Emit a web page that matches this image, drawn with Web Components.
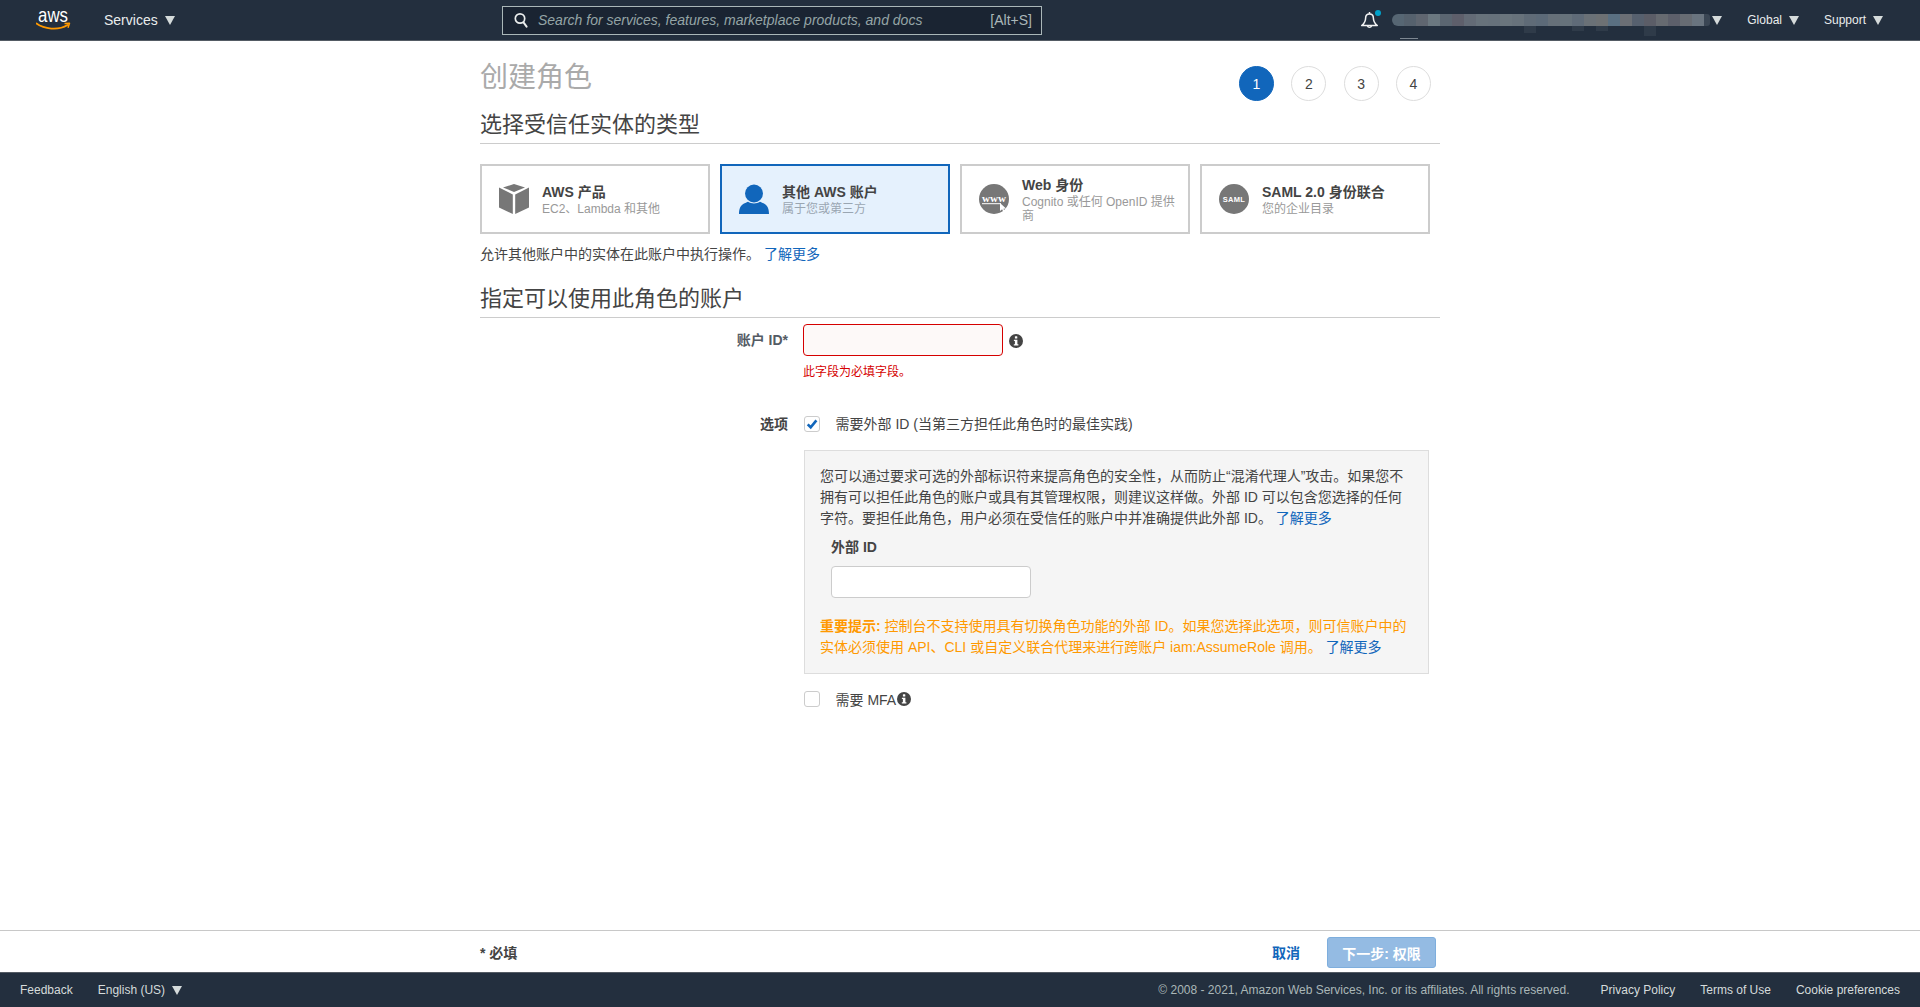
<!DOCTYPE html>
<html lang="zh-CN">
<head>
<meta charset="utf-8">
<title>创建角色</title>
<style>
html,body{margin:0;padding:0;height:100%;}
body{font-family:"Liberation Sans","Noto Sans CJK SC",sans-serif;font-size:14px;color:#444;background:#fff;display:flex;flex-direction:column;height:1007px;overflow:hidden;}
aws-header{flex:none;}
create-role-page{flex:1 1 auto;min-height:0;}
wizard-bar{flex:none;}
aws-footer{flex:none;}
</style>
</head>
<body>
<aws-header></aws-header>
<create-role-page></create-role-page>
<wizard-bar></wizard-bar>
<aws-footer></aws-footer>

<script>
function def(name, css, html, init){
  customElements.define(name, class extends HTMLElement{
    connectedCallback(){
      if(this.shadowRoot) return;
      const r=this.attachShadow({mode:'open'});
      const h=typeof html==='function'?html(this):html;
      r.innerHTML='<style>'+css+'</style>'+h;
      if(init) init(this,r);
    }
  });
}
const INFO='<svg width="14" height="14" viewBox="0 0 14 14" style="display:block"><circle cx="7" cy="7" r="7" fill="#444"/><rect x="5.9" y="2.3" width="2.4" height="2.3" rx=".4" fill="#fff"/><path d="M4.9 5.7h3.5v4.6h1v1.3H4.8v-1.3h1.1V7H4.9z" fill="#fff"/></svg>';

def('aws-caret',':host{display:inline-block;width:0;height:0;border-left:5px solid transparent;border-right:5px solid transparent;border-top:9px solid var(--c,#d5dbdb);}','');

def('info-icon',':host{display:inline-block;width:14px;height:14px;flex:none;}',INFO);

def('aws-logo',':host{display:block;width:34px;height:40px;}svg{display:block;}',
 '<svg width="42" height="40" viewBox="0 0 42 40"><text x="2" y="22" font-family="Liberation Sans,sans-serif" font-size="21" textLength="30" lengthAdjust="spacingAndGlyphs" fill="#fff">aws</text><path d="M0.500 23.500C8 29 22 31 31.500 25" fill="none" stroke="#f90" stroke-width="1.800" stroke-linecap="round"/><path d="M28.500 23.600 33.500 23.200 32 27.800" fill="none" stroke="#f90" stroke-width="1.500" stroke-linejoin="round"/></svg>');

const CELLS=['#566673','#55616d','#5f6670','#6b7880','#5b6671','#5e5f6b','#636b76','#67727b','#66717b','#6a757d','#67727b','#5f6b77','#5c6a78','#667079','#66727b','#5f6b78','#6a7177','#6d7174','#5a7082','#6b6f75','#56606e','#5b5d67','#666a70','#5c5f6a','#676c73','#69747f'];

def('aws-header',`
:host{display:flex;align-items:center;height:40px;background:#232f3e;border-bottom:1px solid #545b64;color:#eaeded;font-size:14px;padding-left:36px;}
.sv{margin-left:34px;display:flex;align-items:center;gap:7px;width:72px;}
.search{margin-left:326px;width:540px;height:29px;box-sizing:border-box;border:1px solid #aab7b8;background:#1a2432;display:flex;align-items:center;padding:0 9px 0 11px;}
.search svg{flex:none;}
.search i{margin-left:10px;flex:1;color:#95a5a6;font-style:italic;white-space:nowrap;}
.search span{color:#aab7b8;}
.right{margin-left:auto;display:flex;align-items:center;font-size:12px;padding-right:37px;}
.bell{display:block;width:21px;height:20px;margin-right:11px;}
.blur{width:318px;height:12px;border-radius:7px 0 0 7px;display:flex;position:relative;margin-right:2px;}
.blur span{flex:none;width:12px;height:12px;}
.blur span:first-child{border-radius:7px 0 0 7px;}
.blur b{flex:1;background:#3a4654;border-radius:0 3px 3px 0;}
.d{position:absolute;top:12px;width:12px;background:#2f3b49;}
.mark{position:absolute;left:8px;top:24px;width:18px;height:1px;background:#7d8791;}
.g{display:flex;align-items:center;gap:7px;}
`,`
<aws-logo></aws-logo>
<div class="sv">Services <aws-caret></aws-caret></div>
<div class="search">
  <svg width="14" height="16" viewBox="0 0 14 16"><circle cx="6" cy="6.500" r="4.700" fill="none" stroke="#eaeded" stroke-width="1.700"/><path d="M9.300 10.200 12.600 14.600" stroke="#eaeded" stroke-width="2" stroke-linecap="round"/></svg>
  <i>Search for services, features, marketplace products, and docs</i><span>[Alt+S]</span>
</div>
<div class="right">
  <svg class="bell" viewBox="0 0 21 20"><path d="M9.500 4c-2.600 0-3.900 1.800-3.900 4.200 0 3-.8 4.800-3.900 7.300h15.600c-3.100-2.500-3.900-4.300-3.900-7.300C13.400 5.800 12.100 4 9.500 4z" fill="none" stroke="#f2f3f3" stroke-width="1.500" stroke-linejoin="round"/><path d="M9.500 2v2" stroke="#f2f3f3" stroke-width="1.500"/><path d="M7.400 15.800a2.200 2.200 0 0 0 4.200 0" fill="none" stroke="#f2f3f3" stroke-width="1.400"/><circle cx="18" cy="3" r="3" fill="#00a1c9"/></svg>
  <div class="blur">${CELLS.map(c=>`<span style="background:${c}"></span>`).join('')}<b></b>
    <div class="d" style="left:132px;height:7px"></div><div class="d" style="left:180px;height:5px"></div><div class="d" style="left:204px;height:5px"></div><div class="d" style="left:252px;height:10px"></div>
    <div class="mark"></div></div>
  <aws-caret></aws-caret>
  <div class="g" style="margin-left:25px">Global <aws-caret></aws-caret></div>
  <div class="g" style="margin-left:25px">Support <aws-caret></aws-caret></div>
</div>
`);

def('step-dots',`
:host{display:flex;gap:17.330px;}
span{width:35px;height:35px;box-sizing:border-box;border:1px solid #ddd;border-radius:50%;display:flex;align-items:center;justify-content:center;font-size:14px;color:#444;background:#fff;}
span.on{background:#1166bb;border-color:#1166bb;color:#fff;}
`,'<span class="on">1</span><span>2</span><span>3</span><span>4</span>');

def('page-title',`
:host{display:flex;justify-content:space-between;align-items:flex-start;}
h1{margin:0;font-size:28px;line-height:34px;font-weight:400;color:#aaa;}
step-dots{margin:5px 9px 0 0;}
`,'<h1><slot></slot></h1><step-dots></step-dots>');

def('section-title',`
:host{display:block;border-bottom:1px solid #ccc;font-size:22px;line-height:30px;padding-bottom:3px;color:#444;}
`,'<slot></slot>');

const ICONS={
 cube:'<svg width="30" height="31" viewBox="0 0 30 31"><path d="M15 0 26 3.500 15 8 4 3.500z" fill="#777"/><path d="M0 3.500 13.800 10.500V30L0 23.500z" fill="#777"/><path d="M30 3.500 16.200 10.500V30L30 23.500z" fill="#777"/></svg>',
 user:'<svg width="30" height="30" viewBox="0 0 30 30"><circle cx="15" cy="9.500" r="9" fill="#1166bb"/><path d="M0 30c0-6 2-9 5-10.500 2-1 3-1.500 4-1.800 3.500 2.300 8.500 2.300 12 0 1 .3 2 .8 4 1.800 3 1.500 5 4.500 5 10.500z" fill="#1166bb"/></svg>',
 web:'<svg width="30" height="30" viewBox="0 0 30 30"><circle cx="15" cy="15" r="15" fill="#777"/><text x="3" y="18" font-family="Liberation Serif,serif" font-weight="700" font-size="11" fill="#fff" textLength="24" lengthAdjust="spacingAndGlyphs">www</text><path d="M3 19.700h19" stroke="#fff" stroke-width="1"/><path d="M21 19l6 5.500-2.600.300 1.300 2.500-1.300.700-1.300-2.700-2.100 1.600z" fill="#fff"/></svg>',
 saml:'<svg width="30" height="30" viewBox="0 0 30 30"><circle cx="15" cy="15" r="15" fill="#777"/><text x="15" y="18" text-anchor="middle" font-family="Liberation Sans,sans-serif" font-weight="700" font-size="7.500" letter-spacing=".3" fill="#fff">SAML</text></svg>'
};

def('type-card',`
:host{display:flex;align-items:center;width:230px;height:70px;box-sizing:border-box;border:2px solid #ccc;padding:0 10px 0 17px;gap:13px;background:#fff;}
:host([selected]){border-color:#1166bb;background:#e5f1fd;}
.ic{flex:none;width:30px;height:31px;display:block;}
.ic svg{display:block;}
.tx{padding-top:2px;}
.t{font-size:14px;line-height:17px;font-weight:700;color:#444;}
.s{font-size:12px;line-height:14px;margin-top:1px;color:#999;}
:host([selected]) .s{color:#9aa6b2;}
`,el=>`<div class="ic">${ICONS[el.getAttribute('icon')]}</div><div class="tx"><div class="t">${el.getAttribute('heading')}</div><div class="s">${el.getAttribute('sub')}</div></div>`);

def('aws-link',':host{display:inline;color:#1166bb;cursor:pointer;}','<slot></slot>');

def('form-row',`
:host{display:grid;grid-template-columns:308px 1fr;column-gap:15px;}
.l{text-align:right;color:#444;}
`,'<div class="l"><slot name="label"></slot></div><div><slot></slot></div>');

def('aws-input',`
:host{display:block;width:200px;height:32px;box-sizing:border-box;border:1px solid #ccc;border-radius:4px;background:#fff;}
:host([invalid]){border-color:#d50000;background:#fdf9f8;}
`,'');

def('aws-checkbox',`
:host{display:flex;align-items:center;color:#444;margin-left:1px;}
.b{flex:none;width:16px;height:16px;box-sizing:border-box;border:1px solid #ccc;border-radius:3px;margin-right:15.500px;background:#fff;display:block;}
svg{display:block;}
`,el=>`<div class="b">${el.hasAttribute('checked')?'<svg width="14" height="14" viewBox="0 0 14 14"><path d="M2.700 7.400 5.700 10.300 11.400 3.400" fill="none" stroke="#1166bb" stroke-width="2.600"/></svg>':''}</div><slot></slot>`);

def('external-id-panel',`
:host{display:block;width:625px;box-sizing:border-box;background:#f5f5f5;border:1px solid #ddd;padding:15px 15px 15px 15px;margin:18px 0 0 1px;line-height:21px;color:#444;}
.f{padding-left:11px;margin-top:8px;}
.f b{display:block;line-height:21px;}
aws-input{margin-top:8px;}
.w{color:#f90;margin-top:18px;}
.w b{font-weight:700;}
`,`<div><slot name="desc"></slot></div>
<div class="f"><b>外部 ID</b><aws-input></aws-input></div>
<div class="w"><slot name="warn"></slot></div>`);

def('create-role-page',`
:host{display:block;}
.wrap{width:960px;margin:0 auto;padding-top:20px;}
.cards{display:flex;gap:10px;margin-top:20px;}
.note{margin-top:10px;line-height:20px;}
`,`<div class="wrap">
<page-title>创建角色</page-title>
<section-title style="margin-top:9px">选择受信任实体的类型</section-title>
<div class="cards">
<type-card icon="cube" heading="AWS 产品" sub="EC2、Lambda 和其他"></type-card>
<type-card icon="user" selected heading="其他 AWS 账户" sub="属于您或第三方"></type-card>
<type-card icon="web" heading="Web 身份" sub="Cognito 或任何 OpenID 提供商"></type-card>
<type-card icon="saml" heading="SAML 2.0 身份联合" sub="您的企业目录"></type-card>
</div>
<div class="note">允许其他账户中的实体在此账户中执行操作。 <aws-link>了解更多</aws-link></div>
<section-title style="margin-top:20px">指定可以使用此角色的账户</section-title>
<form-row style="margin-top:6px">
  <div slot="label" style="line-height:32px;font-weight:700;color:#545b64">账户 ID*</div>
  <div style="display:flex;align-items:center;gap:6px"><aws-input invalid></aws-input><info-icon style="margin-top:2px"></info-icon></div>
  <div style="color:#d50000;font-size:12px;line-height:15px;margin-top:9px">此字段为必填字段。</div>
</form-row>
<form-row style="margin-top:36px">
  <div slot="label" style="line-height:16px;font-weight:700;color:#444">选项</div>
  <aws-checkbox checked><span style="line-height:16px">需要外部 ID (当第三方担任此角色时的最佳实践)</span></aws-checkbox>
  <external-id-panel>
    <span slot="desc">您可以通过要求可选的外部标识符来提高角色的安全性，从而防止“混淆代理人”攻击。如果您不拥有可以担任此角色的账户或具有其管理权限，则建议这样做。外部 ID 可以包含您选择的任何字符。要担任此角色，用户必须在受信任的账户中并准确提供此外部 ID。 <aws-link>了解更多</aws-link></span>
    <span slot="warn"><b>重要提示:</b> 控制台不支持使用具有切换角色功能的外部 ID。如果您选择此选项，则可信账户中的实体必须使用 API、CLI 或自定义联合代理来进行跨账户 iam:AssumeRole 调用。 <aws-link>了解更多</aws-link></span>
  </external-id-panel>
  <aws-checkbox style="margin-top:15px"><span>需要 MFA</span><info-icon style="margin-left:1px"></info-icon></aws-checkbox>
</form-row>
</div>`);

def('wizard-bar',`
:host{display:block;height:41px;border-top:1px solid #c8c8c8;background:#fff;}
.in{width:960px;margin:0 auto;height:41px;display:flex;align-items:center;}
.r{font-size:14px;color:#444;font-weight:700;}
.c{margin-left:auto;color:#1166bb;font-weight:700;margin-right:27px;}
.b{width:109px;height:31px;margin:2px 4px 0 0;box-sizing:border-box;border:1px solid #7eaedd;border-radius:3px;background:#94bbe3;color:#fff;font-weight:700;display:flex;align-items:center;justify-content:center;}
`,`<div class="in"><div class="r">* 必填</div><div class="c">取消</div><div class="b">下一步: 权限</div></div>`);

def('aws-footer',`
:host{display:flex;align-items:center;height:34px;background:#232f3e;border-top:1px solid #545b64;color:#d5dbdb;font-size:12px;padding:0 20px;}
.l{display:flex;align-items:center;gap:25px;}
.lang{display:flex;align-items:center;gap:7px;}
.r{margin-left:auto;display:flex;gap:25px;}
.cp{color:#aab7b8;margin-right:6px;}
`,`<div class="l"><span>Feedback</span><span class="lang">English (US) <aws-caret></aws-caret></span></div>
<div class="r"><span class="cp">© 2008 - 2021, Amazon Web Services, Inc. or its affiliates. All rights reserved.</span><span>Privacy Policy</span><span>Terms of Use</span><span>Cookie preferences</span></div>`);
</script>
</body>
</html>
